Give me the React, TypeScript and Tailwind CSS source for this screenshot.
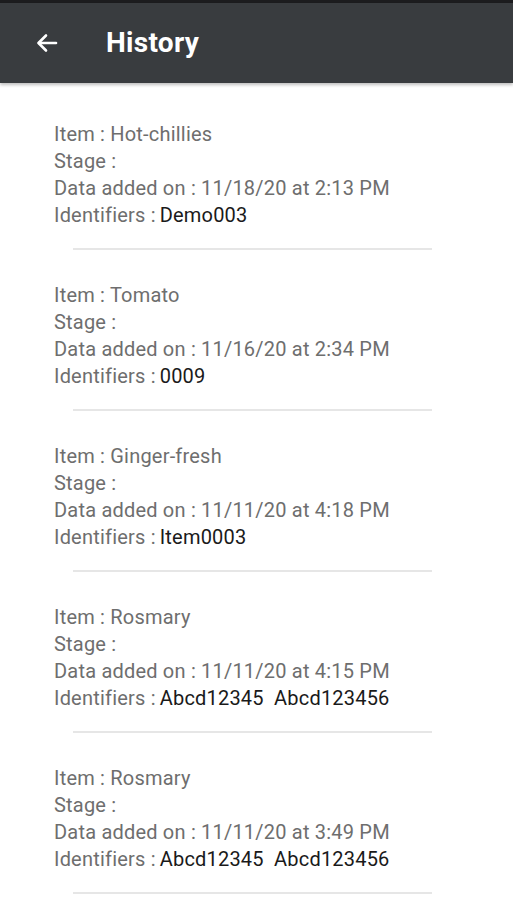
import React from "react";

const items = [
  { item: "Hot-chillies", date: "11/18/20 at 2:13 PM", ids: "Demo003" },
  { item: "Tomato", date: "11/16/20 at 2:34 PM", ids: "0009" },
  { item: "Ginger-fresh", date: "11/11/20 at 4:18 PM", ids: "Item0003" },
  { item: "Rosmary", date: "11/11/20 at 4:15 PM", ids: "Abcd12345\u00a0\u00a0Abcd123456" },
  { item: "Rosmary", date: "11/11/20 at 3:49 PM", ids: "Abcd12345\u00a0\u00a0Abcd123456" },
];

export default function App() {
  return (
    <div className="w-[513px] h-[900px] bg-white overflow-hidden" style={{ fontFamily: "Roboto, 'Noto Sans', sans-serif" }}>
      <div className="h-[3px] bg-[#1c1c1e]" />
      <div className="h-[80px] bg-[#393c3f] flex items-center shadow-[0_2px_3px_rgba(0,0,0,0.25)] relative">
        <div className="w-[106px] pl-[35px] flex items-center">
          <svg width="24" height="24" viewBox="0 0 24 24" fill="none" stroke="white" strokeWidth="2.6" strokeLinecap="round" strokeLinejoin="round">
            <path d="M21 12H4" />
            <path d="M11 4.5L3.5 12L11 19.5" />
          </svg>
        </div>
        <div className="text-white text-[28px] font-bold tracking-[0.3px]">History</div>
      </div>
      <div className="pt-[38px]">
        {items.map((it, i) => (
          <div key={i} className="mb-[32px]">
            <div className="pl-[54px] text-[20px] tracking-[0.2px] leading-[27px] text-[#6e6e6e]">
              <div>Item : {it.item}</div>
              <div>Stage :</div>
              <div>Data added on : {it.date}</div>
              <div>
                Identifiers :<span className="text-[#1a1a1a] ml-[4px]">{it.ids}</span>
              </div>
            </div>
            <div className="mt-[19px] ml-[73px] w-[359px] h-[2px] bg-[#e6e6e6]" />
          </div>
        ))}
      </div>
    </div>
  );
}
